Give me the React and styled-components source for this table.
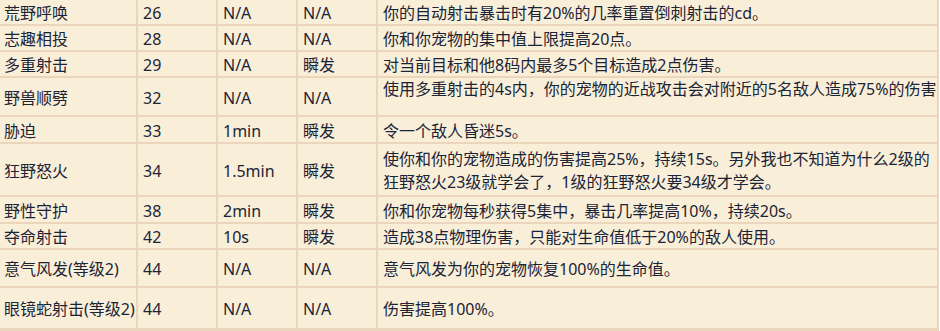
import React from 'react';
import styled, { createGlobalStyle } from 'styled-components';

const GlobalStyle = createGlobalStyle`
  body {
    margin: 0;
    background: #fff;
    font-family: "Noto Sans", "Noto Sans CJK SC", sans-serif;
  }
`;

const Table = styled.div`
  display: flex;
  flex-direction: column;
  gap: 2px;
  width: 937px;
  padding-right: 2px;
  background: #ebd5bc;
  overflow: hidden;
  height: 331px;
`;

const Row = styled.div`
  display: grid;
  grid-template-columns: 136px 78px 78px 78px 559px;
  column-gap: 2px;
  height: ${(props) => props.$h}px;
  flex-shrink: 0;
`;

const Cell = styled.div`
  display: flex;
  align-items: ${(props) => (props.$top ? 'flex-start' : 'center')};
  box-sizing: border-box;
  padding: ${(props) => (props.$top ? '0' : '3px')} 2px 0 ${(props) => (props.$first ? '4px' : '5px')};
  background: #f9efd9;
  color: #1b2436;
  font-size: 16px;
  line-height: 23px;
  white-space: ${(props) => (props.$wrap ? 'normal' : 'nowrap')};
  overflow: hidden;
`;

const skills = [
  { name: '荒野呼唤', lvl: 26, cd: 'N/A', cast: 'N/A', desc: '你的自动射击暴击时有20%的几率重置倒刺射击的cd。', h: 24 },
  { name: '志趣相投', lvl: 28, cd: 'N/A', cast: 'N/A', desc: '你和你宠物的集中值上限提高20点。', h: 24 },
  { name: '多重射击', lvl: 29, cd: 'N/A', cast: '瞬发', desc: '对当前目标和他8码内最多5个目标造成2点伤害。', h: 24 },
  { name: '野兽顺劈', lvl: 32, cd: 'N/A', cast: 'N/A', desc: '使用多重射击的4s内，你的宠物的近战攻击会对附近的5名敌人造成75%的伤害', h: 37, top: true, single: true },
  { name: '胁迫', lvl: 33, cd: '1min', cast: '瞬发', desc: '令一个敌人昏迷5s。', h: 25 },
  { name: '狂野怒火', lvl: 34, cd: '1.5min', cast: '瞬发', desc: '使你和你的宠物造成的伤害提高25%，持续15s。另外我也不知道为什么2级的狂野怒火23级就学会了，1级的狂野怒火要34级才学会。', h: 51 },
  { name: '野性守护', lvl: 38, cd: '2min', cast: '瞬发', desc: '你和你宠物每秒获得5集中，暴击几率提高10%，持续20s。', h: 25 },
  { name: '夺命射击', lvl: 42, cd: '10s', cast: '瞬发', desc: '造成38点物理伤害，只能对生命值低于20%的敌人使用。', h: 24 },
  { name: '意气风发(等级2)', lvl: 44, cd: 'N/A', cast: 'N/A', desc: '意气风发为你的宠物恢复100%的生命值。', h: 36 },
  { name: '眼镜蛇射击(等级2)', lvl: 44, cd: 'N/A', cast: 'N/A', desc: '伤害提高100%。', h: 40 },
];

export default function App() {
  return (
    <>
      <GlobalStyle />
      <Table>
        {skills.map((s, k) => (
          <Row key={`skill_${k}`} $h={s.h}>
            <Cell $first>{s.name}</Cell>
            <Cell>{s.lvl}</Cell>
            <Cell>{s.cd}</Cell>
            <Cell>{s.cast}</Cell>
            <Cell $wrap={!s.single} $top={s.top}>{s.desc}</Cell>
          </Row>
        ))}
      </Table>
    </>
  );
}
